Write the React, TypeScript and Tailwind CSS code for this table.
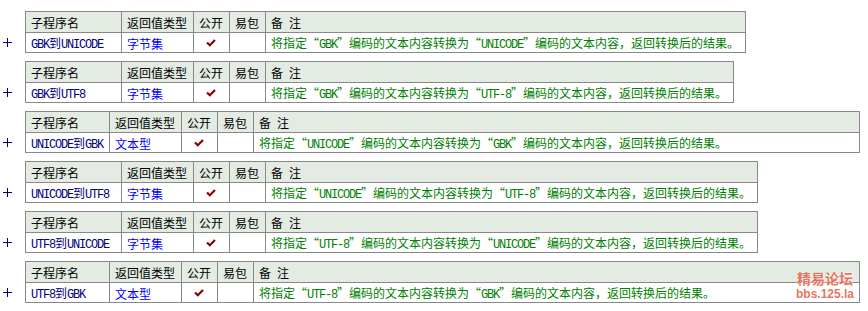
import React from "react";

type Row = {
  name: string;
  type: string;
  remark: string;
  w: [number, number, number];
};

const rows: Row[] = [
  { name: "GBK到UNICODE", type: "字节集", remark: "将指定“GBK”编码的文本内容转换为“UNICODE”编码的文本内容，返回转换后的结果。", w: [96, 72, 480] },
  { name: "GBK到UTF8", type: "字节集", remark: "将指定“GBK”编码的文本内容转换为“UTF-8”编码的文本内容，返回转换后的结果。", w: [96, 72, 468] },
  { name: "UNICODE到GBK", type: "文本型", remark: "将指定“UNICODE”编码的文本内容转换为“GBK”编码的文本内容，返回转换后的结果。", w: [84, 72, 606] },
  { name: "UNICODE到UTF8", type: "字节集", remark: "将指定“UNICODE”编码的文本内容转换为“UTF-8”编码的文本内容，返回转换后的结果。", w: [96, 72, 492] },
  { name: "UTF8到UNICODE", type: "字节集", remark: "将指定“UTF-8”编码的文本内容转换为“UNICODE”编码的文本内容，返回转换后的结果。", w: [96, 72, 492] },
  { name: "UTF8到GBK", type: "文本型", remark: "将指定“UTF-8”编码的文本内容转换为“GBK”编码的文本内容，返回转换后的结果。", w: [84, 72, 606] },
];

function Mixed({ text }: { text: string }) {
  const parts = text.match(/[\x00-\x7f]+|[“”]|[^\x00-\x7f“”]+/g) || [];
  return (
    <span className="whitespace-pre">
      {parts.map((p, i) => {
        if (p === "“")
          return (
            <span key={i} className="inline-block w-[12px] text-right font-['Noto_Sans_CJK_SC',sans-serif] text-[12px]">
              {p}
            </span>
          );
        if (p === "”")
          return (
            <span key={i} className="inline-block w-[12px] text-left font-['Noto_Sans_CJK_SC',sans-serif] text-[12px]">
              {p}
            </span>
          );
        return /^[\x00-\x7f]/.test(p) ? (
          <span key={i} className="font-['Liberation_Mono',monospace] text-[12px] tracking-[-1.2px]">
            {p}
          </span>
        ) : (
          <span key={i} className="font-['Noto_Sans_CJK_SC',sans-serif] text-[12px] tracking-[0px]">
            {p}
          </span>
        );
      })}
    </span>
  );
}

function Check() {
  return (
    <svg width="10" height="8" viewBox="0 0 10 8">
      <path d="M1 3.5 L3.8 6.2 L9 1" fill="none" stroke="#8b0000" strokeWidth="2.2" />
    </svg>
  );
}

function Plus() {
  return (
    <svg width="9" height="9" viewBox="0 0 9 9" shapeRendering="crispEdges">
      <rect x="0" y="4" width="9" height="1" fill="#000080" />
      <rect x="4" y="0" width="1" height="9" fill="#000080" />
    </svg>
  );
}

function Block({ r }: { r: Row }) {
  const cell = "border-r border-b border-[#888888] flex items-center pl-[5px] whitespace-nowrap overflow-hidden";
  return (
    <div className="flex">
      <div className="w-[25px] flex flex-col">
        <div className="h-[22px]" />
        <div className="h-[20px] flex items-center pl-[3px] pb-[1px]">
          <Plus />
        </div>
      </div>
      <div className="border-l border-t border-[#888888] flex flex-col leading-none">
        <div className="flex h-[21px] bg-[#e3ebe3] text-black">
          <div className={cell} style={{ width: r.w[0] }}><Mixed text="子程序名" /></div>
          <div className={cell} style={{ width: r.w[1] }}><Mixed text="返回值类型" /></div>
          <div className={`${cell} w-[36px]`}><Mixed text="公开" /></div>
          <div className={`${cell} w-[36px]`}><Mixed text="易包" /></div>
          <div className={cell} style={{ width: r.w[2] }}><Mixed text="备 注" /></div>
        </div>
        <div className="flex h-[20px] bg-white">
          <div className={`${cell} text-[#000080]`} style={{ width: r.w[0] }}><Mixed text={r.name} /></div>
          <div className={`${cell} text-[#0000ff]`} style={{ width: r.w[1] }}><Mixed text={r.type} /></div>
          <div className={`${cell} w-[36px] justify-center !pl-0 pr-[1px]`}><Check /></div>
          <div className={`${cell} w-[36px]`} />
          <div className={`${cell} text-[#008000]`} style={{ width: r.w[2] }}><Mixed text={r.remark} /></div>
        </div>
      </div>
    </div>
  );
}

export default function App() {
  return (
    <div className="relative w-[868px] h-[311px] bg-white overflow-hidden">
      <div className="pt-[11px] flex flex-col gap-[8px]">
        {rows.map((r, i) => (
          <Block key={i} r={r} />
        ))}
      </div>
      <div className="absolute left-[796px] top-[271px] flex flex-col items-center leading-none text-[#e36a52] opacity-90 [text-shadow:0_0_2px_#fff,0_0_2px_#fff]">
        <span className="font-['Noto_Sans_CJK_SC',sans-serif] font-bold text-[14px] tracking-[0px]">精易论坛</span>
        <span className="font-['Liberation_Sans',sans-serif] font-bold text-[12px] mt-[3px]">bbs.125.la</span>
      </div>
    </div>
  );
}
